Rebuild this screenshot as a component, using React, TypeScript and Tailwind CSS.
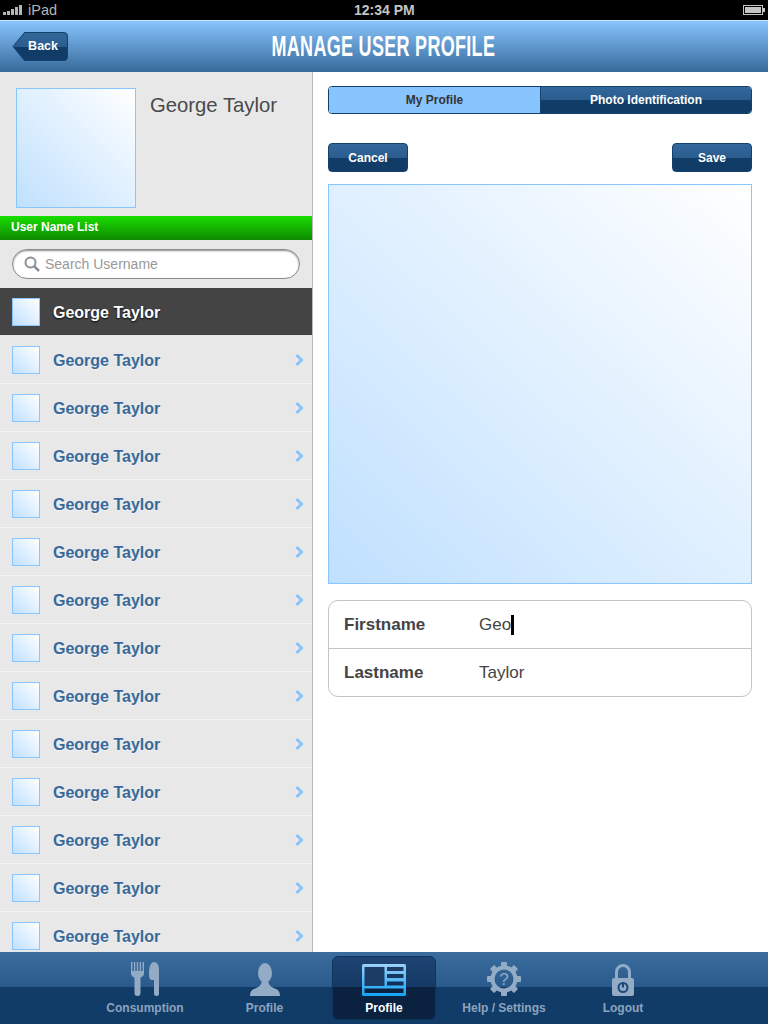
import React from 'react';

const rows = Array.from({ length: 13 }, (_, i) => i);
const sans = { fontFamily: '"Liberation Sans", Arial, sans-serif' };

// placeholder picture used for the avatars and the big photo
const Thumb = ({ className }: { className: string }) => (
  <div className={`border border-[#8ac6fe] bg-gradient-to-tr from-[#bfe0fe] to-white shrink-0 ${className}`} />
);

const glossBtn = 'bg-[linear-gradient(to_bottom,#33689b_0%,#2b5c8e_50%,#123c68_50%,#123c68_100%)]';

const BackButton = () => (
  <div className="absolute left-[12px] top-[11px] w-[56px] h-[29px] flex items-center justify-end pr-[10px]">
    <svg width="56" height="29" viewBox="0 0 56 29" className="absolute left-0 top-0">
      <defs>
        <linearGradient id="backFill" x1="0" y1="0" x2="0" y2="1">
          <stop offset="0" stopColor="#33689b" />
          <stop offset="0.5" stopColor="#2b5c8e" />
          <stop offset="0.5" stopColor="#123c68" />
          <stop offset="1" stopColor="#123c68" />
        </linearGradient>
      </defs>
      <path d="M1 14.500 L12.500 0.500 H52 Q55.500 0.500 55.500 4 V25 Q55.500 28.500 52 28.500 H12.500 Z" fill="url(#backFill)" stroke="#14406c" />
    </svg>
    <span className="relative text-[12.500px] leading-[15px] font-bold text-white">Back</span>
  </div>
);

const Signal = () => (
  <svg width="20" height="10" viewBox="0 0 20 10" fill="#b5b5b5">
    <rect x="0" y="7" width="3" height="3" />
    <rect x="4" y="6" width="3" height="4" />
    <rect x="8" y="4" width="3" height="6" />
    <rect x="12" y="2" width="3" height="8" />
    <rect x="16" y="0" width="3" height="10" />
  </svg>
);

const Battery = () => (
  <svg width="22" height="10" viewBox="0 0 22 10">
    <rect x="0.500" y="0.500" width="19" height="9" fill="none" stroke="#c4c4c4" />
    <rect x="2" y="2" width="16" height="6" fill="#c4c4c4" />
    <rect x="20" y="3" width="2" height="4" fill="#c4c4c4" />
  </svg>
);

const ForkKnife = () => (
  <svg width="28" height="34" viewBox="0 0 28 34" fill="#93abc5">
    <path d="M0 0h1.400v9h1.500V0h1.400v9h1.500V0h1.400v9h1.500V0h1.400v9h1.500V0H13v11c0 2.500-1.500 4-3.500 4.500V31a3 3 0 0 1-6 0V15.500C1.500 15 0 13.500 0 11z" />
    <path d="M18 12C18 4 20 0 23 0s5 3 5 7v24.500a2.500 2.500 0 0 1-5 0V18h-2c-2 0-3-2-3-6z" />
  </svg>
);

const Person = () => (
  <svg width="30" height="33" viewBox="0 0 30 33" fill="#93abc5">
    <ellipse cx="15" cy="10" rx="7" ry="10" />
    <path d="M0 33c0-3 1-6 4-7 3-1.500 7-2.500 7.500-7h7c.5 4.500 4.500 5.500 7.500 7 3 1 4 4 4 7z" />
  </svg>
);

const ProfileCard = () => (
  <svg width="44" height="32" viewBox="0 0 44 32">
    <defs>
      <linearGradient id="cardFill" x1="0" y1="0" x2="0" y2="1">
        <stop offset="0" stopColor="#9cd0fb" />
        <stop offset="1" stopColor="#12a4f4" />
      </linearGradient>
    </defs>
    <rect x="0" y="0" width="44" height="32" rx="1.500" fill="url(#cardFill)" />
    <rect x="2.500" y="3" width="20" height="19" fill="#1c3c66" />
    <rect x="25" y="3" width="16.500" height="4" fill="#1c3c66" />
    <rect x="25" y="10" width="16.500" height="4" fill="#173760" />
    <rect x="25" y="17.500" width="16.500" height="4" fill="#10305a" />
    <rect x="2.500" y="24.500" width="39" height="4.500" fill="#0a2140" />
  </svg>
);

const Gear = () => (
  <svg width="34" height="34" viewBox="0 0 34 34">
    <g fill="#93abc5">
      {[0, 45, 90, 135, 180, 225, 270, 315].map(a => (
        <rect key={a} x="14" y="0" width="6" height="6" rx="1" transform={`rotate(${a} 17 17)`} />
      ))}
    </g>
    <circle cx="17" cy="17" r="11.500" fill="none" stroke="#93abc5" strokeWidth="4" />
    <text x="17" y="23" textAnchor="middle" fontSize="17" fill="#93abc5" fontFamily='"Liberation Sans", Arial, sans-serif'>?</text>
  </svg>
);

const Lock = () => (
  <svg width="22" height="33" viewBox="0 0 22 33">
    <path d="M4.500 16V9a6.500 6.500 0 0 1 13 0v7" fill="none" stroke="#93abc5" strokeWidth="3" />
    <rect x="0" y="15" width="22" height="18" rx="2" fill="#93abc5" />
    <circle cx="11" cy="24.500" r="4.500" fill="none" stroke="#1d4a79" strokeWidth="2" />
    <rect x="10" y="19" width="2" height="5.500" fill="#1d4a79" />
  </svg>
);

const TabItem = ({ label, width, icon }: { label: string; width: string; icon: React.ReactNode }) => (
  <div className={`flex flex-col items-center ${width}`}>
    <div className="h-[36px] flex items-end justify-center">{icon}</div>
    <span className="mt-[5px] text-[12px] leading-[14px] font-bold text-[#8aa4bf] whitespace-nowrap">{label}</span>
  </div>
);

export default function App() {
  return (
    <div className="relative w-[768px] h-[1024px] overflow-hidden bg-white flex flex-col" style={sans}>
      {/* Status bar */}
      <div className="h-[20px] bg-black flex items-center justify-between pl-[3px] pr-[3px] relative shrink-0">
        <div className="flex items-center gap-[5px]">
          <Signal />
          <span className="text-[14.500px] leading-[20px] text-[#b5b5b5]">iPad</span>
        </div>
        <span className="absolute left-[354px] top-0 text-[14px] leading-[20px] font-bold text-[#c4c4c4]">12:34 PM</span>
        <Battery />
      </div>

      {/* Header */}
      <div className="relative h-[52px] shrink-0 border-t border-[#c4e2fd] bg-gradient-to-b from-[#88c5fe] to-[#376a9b] flex items-center justify-center">
        <BackButton />
        <span className="inline-block mb-[2px] mr-[2px] text-[29px] leading-[34px] font-bold text-white tracking-[0.5px] scale-x-[0.62] whitespace-nowrap">MANAGE USER PROFILE</span>
      </div>

      {/* Body */}
      <div className="flex-1 flex min-h-0">
        {/* Left column */}
        <div className="w-[313px] shrink-0 bg-[#e8e8e8] border-r border-[#b8b8b8] overflow-hidden">
          <div className="h-[144px] pl-[16px] pt-[16px] flex">
            <Thumb className="w-[120px] h-[120px]" />
            <span className="ml-[14px] mt-[4px] text-[20.300px] leading-[26px] text-[#4a4a4a]">George Taylor</span>
          </div>
          <div className="h-[24px] bg-gradient-to-b from-[#1ade00] to-[#0d8a00] pl-[11px] text-[12px] leading-[22px] font-bold text-white">
            User Name List
          </div>
          <div className="h-[48px] px-[12px] pt-[9px]">
            <div className="h-[30px] w-[288px] rounded-full border border-[#8c8c8c] bg-white shadow-[inset_0_1px_2px_rgba(0,0,0,0.45)] flex items-center pl-[11px]">
              <svg width="16" height="16" viewBox="0 0 16 16" fill="none" stroke="#8a9098" strokeWidth="2">
                <circle cx="6.500" cy="6.500" r="5" />
                <path d="M10.500 10.500L15 15" strokeWidth="2.500" />
              </svg>
              <span className="ml-[5px] text-[14px] leading-[18px] text-[#999999]">Search Username</span>
            </div>
          </div>
          <div className="h-[47px] bg-[#444444] mb-[1px] flex items-center pl-[12px]">
            <Thumb className="w-[28px] h-[28px]" />
            <span className="ml-[13px] mt-[2px] text-[16px] font-bold text-white [text-shadow:0_1px_2px_rgba(0,0,0,0.9)]">George Taylor</span>
          </div>
          {rows.map(i => (
            <div key={i} className="h-[48px] border-b border-[#f3f3f3] flex items-center pl-[12px] pr-[8px]">
              <Thumb className="w-[28px] h-[28px]" />
              <span className="ml-[13px] mt-[2px] text-[16px] font-bold text-[#37699b] [text-shadow:0_1px_0_rgba(255,255,255,0.6)]">George Taylor</span>
              <svg width="9" height="12" viewBox="0 0 9 12" fill="none" stroke="#88c5fe" strokeWidth="3" className="ml-auto">
                <path d="M1.500 1L6.500 6L1.500 11" />
              </svg>
            </div>
          ))}
        </div>

        {/* Right column */}
        <div className="flex-1 pl-[15px] pr-[16px] pt-[14px] bg-white">
          <div className="h-[28px] flex rounded-[4px] border border-[#14406c] overflow-hidden text-[12px] font-bold">
            <div className="w-[212px] bg-[#88c5fe] border-r border-[#14406c] flex items-center justify-center text-[#333333]">My Profile</div>
            <div className={`flex-1 flex items-center justify-center text-white ${glossBtn}`}>Photo Identification</div>
          </div>
          <div className="flex justify-between mt-[29px]">
            <div className={`w-[80px] h-[29px] rounded-[4px] border border-[#14406c] flex items-center justify-center text-[12px] font-bold text-white ${glossBtn}`}>Cancel</div>
            <div className={`w-[80px] h-[29px] rounded-[4px] border border-[#14406c] flex items-center justify-center text-[12px] font-bold text-white ${glossBtn}`}>Save</div>
          </div>
          <Thumb className="w-[424px] h-[400px] mt-[12px]" />
          <div className="mt-[16px] h-[97px] rounded-[10px] border border-[#c4c4c4] text-[#444444]">
            <div className="h-[48px] border-b border-[#c4c4c4] flex items-center pl-[15px]">
              <span className="w-[135px] text-[17px] font-bold">Firstname</span>
              <span className="text-[17px]">Geo</span>
              <span className="w-[3px] h-[20px] bg-black" />
            </div>
            <div className="h-[48px] flex items-center pl-[15px]">
              <span className="w-[135px] text-[17px] font-bold">Lastname</span>
              <span className="text-[17px]">Taylor</span>
            </div>
          </div>
        </div>
      </div>

      {/* Tab bar */}
      <div className="h-[72px] shrink-0 bg-[linear-gradient(to_bottom,#3a6d9e_0%,#2a5a8b_48%,#123c68_48%,#123c68_100%)] flex pl-[85px] pt-[4px]">
        <div className="pt-[4px] flex mr-[8px]">
          <TabItem label="Consumption" width="w-[120px]" icon={<ForkKnife />} />
          <TabItem label="Profile" width="w-[119px]" icon={<Person />} />
        </div>
        <div className="w-[104px] h-[64px] rounded-[6px] border border-[#10335a] bg-[linear-gradient(to_bottom,#1d4474_0%,#163a66_48%,#0a2140_48%,#0a2140_100%)] flex flex-col items-center pt-[7px]">
          <ProfileCard />
          <span className="mt-[5px] text-[12px] leading-[14px] font-bold text-white">Profile</span>
        </div>
        <div className="pt-[4px] flex">
          <TabItem label="Help / Settings" width="w-[136px]" icon={<Gear />} />
          <TabItem label="Logout" width="w-[102px]" icon={<Lock />} />
        </div>
      </div>
    </div>
  );
}
